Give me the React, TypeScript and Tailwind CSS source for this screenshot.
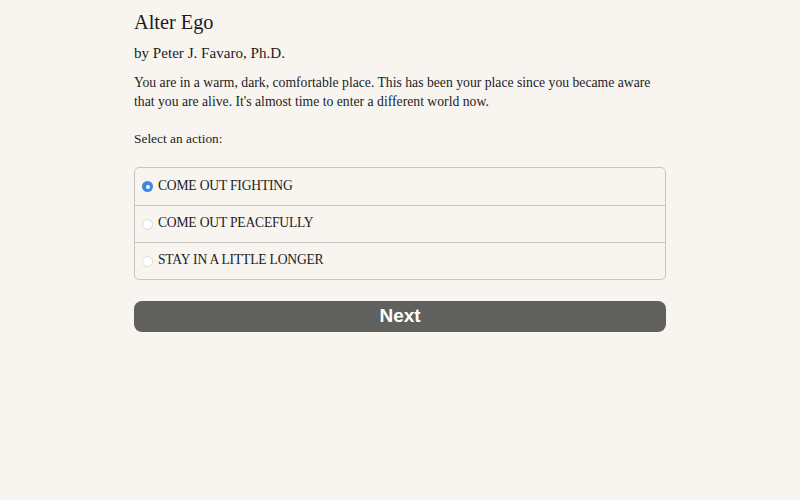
import { useState } from "react";

const options = ["COME OUT FIGHTING", "COME OUT PEACEFULLY", "STAY IN A LITTLE LONGER"];

export default function App() {
    const [choice, setChoice] = useState(0);

    return (
        <div className="min-h-[500px] w-full bg-[#f8f5f1] text-[#1c1c1c] font-['Liberation_Serif','DejaVu_Serif',serif]">
            <div className="w-[532px] ml-[134px] pt-[9px]">
                <h1 className="text-[20.3px] leading-[26px]">Alter Ego</h1>
                <p className="mt-[8px] text-[15.1px] leading-[20px]">by Peter J. Favaro, Ph.D.</p>
                <p className="mt-[10px] text-[13.7px] leading-[19px]">
                    You are in a warm, dark, comfortable place. This has been your place since you became aware that you are alive. It's almost time to enter a different world now.
                </p>
                <p className="mt-[18px] text-[13.4px] leading-[19px]">Select an action:</p>
                <div className="mt-[19px] border border-[#c9c6c2] rounded-[5px] flex flex-col">
                    {options.map((label, i) => (
                        <label
                            key={label}
                            onClick={() => setChoice(i)}
                            className={`h-[37px] flex items-center gap-[5px] pl-[7px] text-[13.6px] tracking-[-0.2px] cursor-pointer ${i > 0 ? "border-t border-[#c9c6c2]" : ""}`}
                        >
                            <span
                                className={`w-[11px] h-[11px] rounded-full flex items-center justify-center ${choice === i ? "bg-[#3f86e0]" : "bg-white border border-[#dedbd7]"}`}
                            >
                                {choice === i && <span className="w-[4px] h-[4px] rounded-full bg-white" />}
                            </span>
                            <span className="pb-[1px]">{label}</span>
                        </label>
                    ))}
                </div>
                <button className="mt-[21px] w-full h-[31px] rounded-[8px] bg-[#60605e] text-white text-[19px] font-bold font-['Liberation_Sans',Arial,sans-serif]">
                    Next
                </button>
            </div>
        </div>
    );
}
